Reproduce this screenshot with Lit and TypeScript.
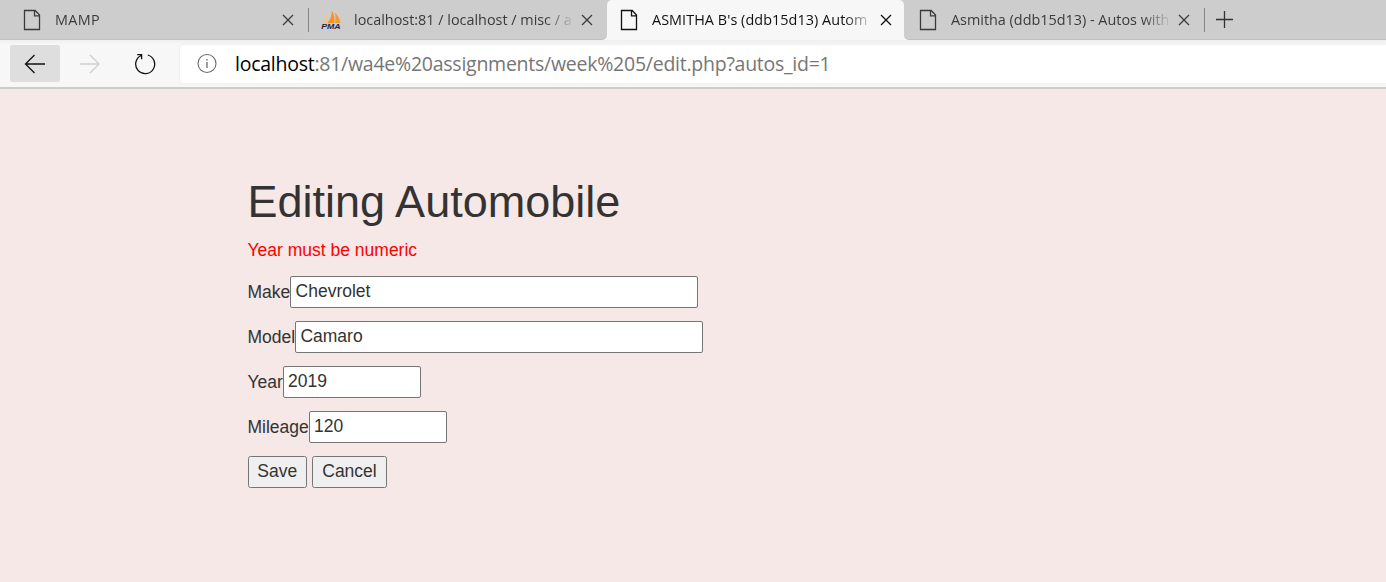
import { LitElement, html, css, svg } from "lit";
import { customElement, property } from "lit/decorators.js";

interface TabData {
  title: string;
  kind: "page" | "pma";
  state: string;
}

const TABS: TabData[] = [
  { title: "MAMP", kind: "page", state: "first" },
  { title: "localhost:81 / localhost / misc / a", kind: "pma", state: "before" },
  { title: "ASMITHA B's (ddb15d13) Autom", kind: "page", state: "active" },
  { title: "Asmitha (ddb15d13) - Autos with", kind: "page", state: "after" },
];

@customElement("browser-tab")
class BrowserTab extends LitElement {
  @property() title = "";
  @property() kind = "page";

  static styles = css`
    :host { display: flex; align-items: center; box-sizing: border-box; height: 40px; color: #3b3b3b; }
    .icon { flex: none; width: 22px; height: 22px; }
    .title {
      flex: 1; min-width: 0; overflow: hidden; white-space: nowrap;
      font: 14.4px/22px "Open Sans", sans-serif; letter-spacing: var(--track, 0);
      margin-left: 12px;
      -webkit-mask-image: linear-gradient(90deg, #000 calc(100% - 26px), transparent calc(100% + 4px));
      mask-image: linear-gradient(90deg, #000 calc(100% - 26px), transparent calc(100% + 4px));
    }
    .close { flex: none; width: 12px; height: 12px; margin-left: 10px; }
    .pma { font: italic 700 7.5px "Liberation Sans", sans-serif; fill: #24264f; }
  `;

  render() {
    const page = svg`<path d="M3.5 1.5h10.7l4.3 4.6v14.4h-15z M13.5 1.5v5.3h5" fill="none" stroke="currentColor" stroke-width="1.3"/>`;
    const pma = svg`
      <path d="M1.8 14.2C5 11.5 7 7.5 7 3.5C8 7 7.6 12 6.9 14z" fill="#f0c690"/>
      <path d="M7.3 14.2C10.5 10.5 12 6 11.7 1.2C14.2 5 15 10 14.3 14z" fill="#f79421"/>
      <path d="M15 14C15.8 11 15.8 7 14.8 3.5C18.2 6.5 20 10.5 20.5 14z" fill="#f59a2e"/>
      <text class="pma" x="1.2" y="20.2" textLength="19.5" lengthAdjust="spacingAndGlyphs">PMA</text>`;
    return html`
      <svg class="icon" viewBox="0 0 22 22">${this.kind === "pma" ? pma : page}</svg>
      <span class="title">${this.title}</span>
      <svg class="close" viewBox="0 0 12 12"><path d="M1 1l10 10M11 1L1 11" stroke="currentColor" stroke-width="1.3"/></svg>
    `;
  }
}

@customElement("app-root")
class AppRoot extends LitElement {
  static styles = css`
    :host { display: block; height: 582px; overflow: hidden; background: #f5e8e6; }
    .strip { display: flex; height: 40px; background: #f7f7f7; }
    browser-tab { background: #cdcdcd; }
    .first { width: 308px; padding: 0 14px 0 21px; border-bottom: 1px solid #c3c3c3; --track: 0.3px; }
    .before { width: 298px; padding: 0 14px 0 11px; border-bottom: 1px solid #c0c0c0; border-bottom-right-radius: 5px; }
    .active { width: 297px; padding: 0 12.5px 0 11px; background: #f7f7f7; color: #111; border-radius: 5px 5px 0 0; --track: 0.06px; }
    .after { width: 300px; padding: 0 14px 0 13px; border-bottom: 1px solid #c0c0c0; border-bottom-left-radius: 5px; }
    .mid { display: flex; background: linear-gradient(#cdcdcd 20px, #f7f7f7 20px); }
    .divider { flex: none; width: 1px; height: 40px; box-sizing: border-box; background: linear-gradient(#cdcdcd 8px, #858585 8px 32px, #cdcdcd 32px 39px, #c0c0c0 39px); }
    .rest { flex: 1; box-sizing: border-box; background: #cdcdcd; border-bottom: 1px solid #c0c0c0; padding: 11px 0 0 11px; }
    .plus { display: block; width: 17px; height: 17px; }
    .toolbar { display: flex; align-items: center; height: 47px; padding-left: 10px; background: linear-gradient(#f0f0f0, #f7f7f7 5px); box-sizing: border-box; }
    .toolbar svg { display: block; flex: none; }
    .nav { flex: none; display: flex; align-items: center; justify-content: center; width: 50px; height: 37px; border-radius: 2px; margin-right: 5px; }
    .back { background: #dedede; }
    .address { flex: 1; display: flex; align-items: center; height: 38px; margin-left: 5px; padding-left: 16px; background: #fff; border-radius: 4px 0 0 4px; box-shadow: 0 0 3px #e4e4e4; }
    .url { margin-left: 17px; font: 19.5px/36px "Open Sans", sans-serif; letter-spacing: -0.25px; color: #767676; white-space: nowrap; }
    .host { color: #000; }
    .edge { height: 2px; background: #cecccb; }
    .content { padding: 88px 0 0 247.5px; font: 17.5px/25px "Liberation Sans", Arial, sans-serif; color: #333; }
    .heading { margin: 0; font-size: 45px; font-weight: 400; line-height: 49.5px; }
    .error { margin: 11px 0 13.5px; color: #f00; }
    .row { display: flex; height: 32px; margin-bottom: 13px; }
    .label { line-height: 32px; }
    .box { box-sizing: border-box; height: 32px; padding: 0 0 2px 4.25px; margin: 0; border: 1px solid #767676; border-radius: 2px; background: #fff; font: inherit; color: inherit; outline: none; }
    .wide { width: 408px; }
    .narrow { width: 138px; }
    .button { box-sizing: border-box; height: 32px; margin: 0 5px 0 0; padding: 0 0 2px; border: 1px solid #767676; border-radius: 2.5px; background: #efefef; font: inherit; color: inherit; }
    .save { width: 59.5px; }
    .cancel { width: 75px; }
  `;

  private tab(t: TabData) {
    return html`<browser-tab class=${t.state} .title=${t.title} .kind=${t.kind}></browser-tab>`;
  }

  private field(label: string, value: string, size: string) {
    return html`<div class="row"><label class="label">${label}</label><input class="box ${size}" .value=${value} /></div>`;
  }

  render() {
    return html`
      <div class="strip">
        ${this.tab(TABS[0])}
        <div class="divider"></div>
        ${this.tab(TABS[1])}
        <div class="mid">${this.tab(TABS[2])}</div>
        ${this.tab(TABS[3])}
        <div class="divider"></div>
        <div class="rest">
          <svg class="plus" viewBox="0 0 17 17"><path d="M8.5 0v17M0 8.5h17" stroke="#333" stroke-width="1.3" /></svg>
        </div>
      </div>
      <div class="toolbar">
        <div class="nav back">
          <svg width="22" height="20" viewBox="0 0 22 20"><path d="M10.5 1L1.5 10l9 9M1.5 10H21" fill="none" stroke="#111" stroke-width="1.3" /></svg>
        </div>
        <div class="nav">
          <svg width="22" height="20" viewBox="0 0 22 20"><path d="M11 1l9 9l-9 9M20 10H1" fill="none" stroke="#cfcfcf" stroke-width="1.3" /></svg>
        </div>
        <div class="nav">
          <svg width="22" height="22" viewBox="0 0 22 22"><path d="M13.8 2A9.5 9.5 0 1 1 7.2 2.5M3.2 1.6h4.4v4.6" fill="none" stroke="#111" stroke-width="1.3" /></svg>
        </div>
        <div class="address">
          <svg width="22" height="22" viewBox="0 0 22 22"><circle cx="11" cy="10.5" r="9" fill="none" stroke="#6b6b6b" stroke-width="1.1" /><path d="M11 9v6M11 6v1.6" stroke="#6b6b6b" stroke-width="1.3" /></svg>
          <span class="url"><span class="host">localhost</span>:81/wa4e%20assignments/week%205/edit.php?autos_id=1</span>
        </div>
      </div>
      <div class="edge"></div>
      <div class="content">
        <h1 class="heading">Editing Automobile</h1>
        <p class="error">Year must be numeric</p>
        ${this.field("Make", "Chevrolet", "wide")}
        ${this.field("Model", "Camaro", "wide")}
        ${this.field("Year", "2019", "narrow")}
        ${this.field("Mileage", "120", "narrow")}
        <div class="row">
          <button class="button save">Save</button>
          <button class="button cancel">Cancel</button>
        </div>
      </div>
    `;
  }
}
